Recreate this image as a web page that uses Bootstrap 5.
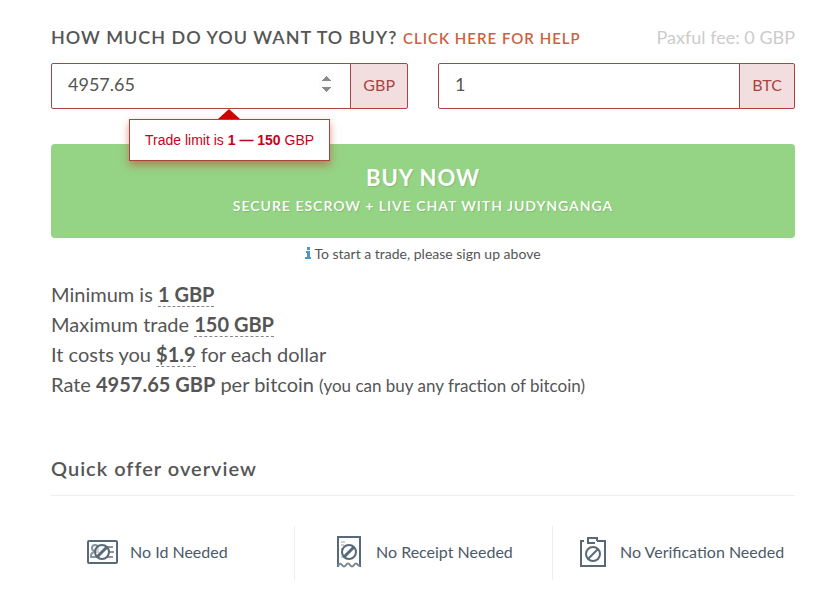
<!DOCTYPE html>
<html lang="en">
<head>
<meta charset="utf-8">
<meta name="viewport" content="width=device-width, initial-scale=1">
<title>Buy bitcoin</title>
<link href="https://cdn.jsdelivr.net/npm/bootstrap@5.3.0/dist/css/bootstrap.min.css" rel="stylesheet">
<style>
body { font-family: Lato, "Open Sans", sans-serif; color: #555; background: #fff; }
.offer { padding: 23px 21px 24px 51px; }
.heading { font-size: 18px; line-height: 28px; letter-spacing: 1px; font-weight: 600; margin: 0; }
.help-link { font-size: 15px; color: #cb6141; text-decoration: none; }
.fee { font-size: 18px; line-height: 28px; color: #ccc; }
.amounts { margin-top: 11px; display: grid; grid-template-columns: 357fr 357fr; gap: 30px; }
.amounts .form-control { height: 46px; padding: 5px 16px 9px; font-size: 18px; color: #555; border-color: #a94442; border-radius: 2px; }
.amounts .input-group-text { padding: 5px 12px 7px; font-size: 16px; color: #a94442; background: #f2dede; border-color: #a94442; border-radius: 2px; }
.amounts input[type=number]::-webkit-inner-spin-button { opacity: 1; }
.limit-tip { position: absolute; z-index: 6; top: 56px; left: 78px; padding: 10px 15px; border: 1px solid #a94442; background: #fff; color: #c7001a; font: 14px/20px "Liberation Sans", Arial, sans-serif; white-space: nowrap; box-shadow: 0 4px 8px rgba(190, 70, 40, .55); }
.limit-tip::before { content: ""; position: absolute; left: 88px; top: -11px; border: 11px solid transparent; border-top: 0; border-bottom: 10px solid #d00000; }
.buy { margin-top: 35px; height: 94px; padding: 0 16px; background: #95d385; border: 0; border-radius: 4px; color: #fff; font-weight: 700; text-shadow: 1px 1px 1px rgba(0, 0, 0, .12); }
.buy:hover { background: #86c976; color: #fff; }
.buy-title { font-size: 22px; line-height: 30px; letter-spacing: 1px; }
.buy-note { font-size: 14px; line-height: 26px; letter-spacing: 1px; font-weight: 600; }
.signup { margin-top: 6px; font-size: 14px; line-height: 20px; gap: 2px; }
.terms { margin-top: 15px; font-size: 20px; line-height: 30px; }
.terms .term { border-bottom: 1px dashed #888; }
.terms .aside-note { font-size: 17px; }
.overview-title { margin: 52px 0 0; padding-bottom: 12px; border-bottom: 1px solid #eee; font-size: 20px; line-height: 30px; letter-spacing: 1px; font-weight: 600; }
.overview { margin-top: 30px; display: grid; grid-template-columns: 243fr 258fr 243fr; font-size: 16px; color: #4c5a69; }
.overview-item { height: 54px; padding: 0 0 3px 36px; white-space: nowrap; }
.overview-item + .overview-item { border-left: 1px solid #eee; padding-left: 42px; }
.overview-item:last-child { padding-left: 26px; }
.overview-item svg { flex: none; }
</style>
</head>
<body>
<main class="offer">
  <form onsubmit="return false">
    <div class="d-flex justify-content-between">
      <h1 class="heading">HOW MUCH DO YOU WANT TO BUY? <a class="help-link" href="#">CLICK HERE FOR HELP</a></h1>
      <span class="fee">Paxful fee: 0 GBP</span>
    </div>
    <div class="amounts position-relative">
      <div class="input-group">
        <input class="form-control" id="fiat" type="number" step="0.01" value="4957.65" aria-describedby="limit">
        <label class="input-group-text" for="fiat">GBP</label>
      </div>
      <div class="input-group">
        <input class="form-control" id="btc" type="text" value="1">
        <label class="input-group-text" for="btc">BTC</label>
      </div>
      <div class="limit-tip" id="limit" role="tooltip">Trade limit is <b>1 — 150</b> GBP</div>
    </div>
    <button class="buy btn w-100 d-flex flex-column align-items-center justify-content-center" type="submit">
      <span class="buy-title">BUY NOW</span>
      <span class="buy-note">SECURE ESCROW + LIVE CHAT WITH JUDYNGANGA</span>
    </button>
    <div class="signup d-flex justify-content-center align-items-center">
      <svg width="7" height="16" viewBox="0 0 7 16" fill="#4a96d2" aria-hidden="true"><path d="M2 1h3v3H2zM1 5h4v6h1v2H0v-2h2V7H1z"/></svg>
      <span>To start a trade, please sign up above</span>
    </div>
  </form>

  <div class="terms">
    <div>Minimum is <b class="term">1 GBP</b></div>
    <div>Maximum trade <b class="term">150 GBP</b></div>
    <div>It costs you <b class="term">$1.9</b> for each dollar</div>
    <div>Rate <b>4957.65 GBP</b> per bitcoin <span class="aside-note">(you can buy any fraction of bitcoin)</span></div>
  </div>

  <h2 class="overview-title">Quick offer overview</h2>
  <div class="overview">
    <div class="overview-item d-flex align-items-center">
      <svg width="43" height="34" viewBox="0 0 43 34" fill="none" stroke="#586979" aria-hidden="true">
        <rect x="1" y="6" width="29" height="22" rx="1" stroke-width="2"/>
        <g stroke="#8a949e" stroke-width="2"><circle cx="8" cy="13" r="3"/><path d="M4 23v-3q1-3 4-3h4M4 22h9M19 12h7M21 17h6M20 22h6"/></g>
        <circle cx="15" cy="17" r="7" fill="#fff" fill-opacity=".55" stroke-width="2"/><path d="M10 22l10-10" stroke-width="3"/>
      </svg>
      <span>No Id Needed</span>
    </div>
    <div class="overview-item d-flex align-items-center">
      <svg width="39" height="34" viewBox="0 0 39 34" fill="none" stroke="#586979" aria-hidden="true">
        <path d="M1 32V2h22v30" stroke-width="2"/>
        <path d="M1 31q2-4 4-1 2 3 4 0 2-3 4 0 2 3 4 0 2-3 4 0l2 1" stroke-width="2" stroke="#7d8994"/>
        <path d="M4 7h4M4 10h3M4 14h3M4 18h2M4 22h3" stroke="#9da6ae"/>
        <circle cx="12" cy="17" r="7" stroke-width="2"/><path d="M7 22l10-10" stroke-width="3"/>
      </svg>
      <span>No Receipt Needed</span>
    </div>
    <div class="overview-item d-flex align-items-center">
      <svg width="41" height="34" viewBox="0 0 41 34" fill="none" stroke="#586979" aria-hidden="true">
        <path d="M5 6H2v25h24V6H18" stroke-width="2"/>
        <path d="M16 8H9V3h9v3" stroke-width="2"/>
        <circle cx="14" cy="19" r="7" stroke-width="2"/><path d="M9 24l10-10" stroke-width="2"/>
      </svg>
      <span>No Verification Needed</span>
    </div>
  </div>
</main>
<script src="https://cdn.jsdelivr.net/npm/bootstrap@5.3.0/dist/js/bootstrap.bundle.min.js"></script>
</body>
</html>
